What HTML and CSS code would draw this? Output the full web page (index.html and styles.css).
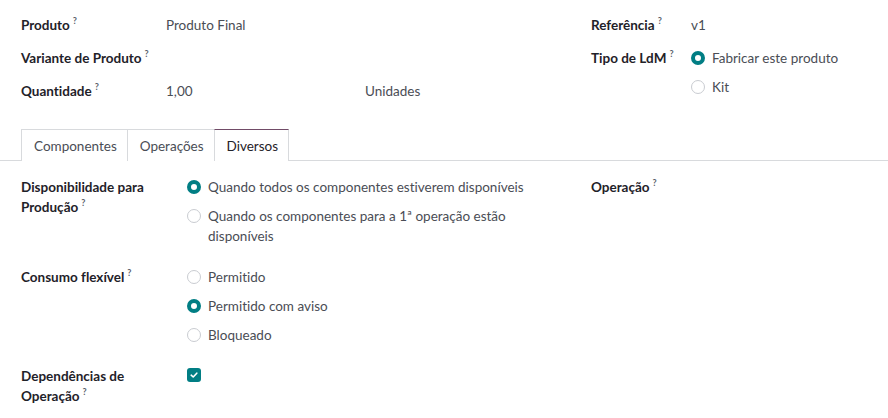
FILE: index.html
```html
<!DOCTYPE html>
<html lang="pt">
<head>
<meta charset="utf-8">
<link rel="stylesheet" href="styles.css">
</head>
<body>
<div class="sheet">
  <div class="top">
    <div class="group group-left">
      <div class="row">
        <div class="label">Produto<sup>?</sup></div>
        <div class="value">Produto Final</div>
      </div>
      <div class="row">
        <div class="label">Variante de Produto<sup>?</sup></div>
        <div class="value"></div>
      </div>
      <div class="row">
        <div class="label">Quantidade<sup>?</sup></div>
        <div class="value qty"><span class="num">1,00</span><span class="uom">Unidades</span></div>
      </div>
    </div>
    <div class="group group-right">
      <div class="row">
        <div class="label">Referência<sup>?</sup></div>
        <div class="value">v1</div>
      </div>
      <div class="row">
        <div class="label">Tipo de LdM<sup>?</sup></div>
        <div class="value options">
          <div class="opt"><span class="radio checked"></span><span>Fabricar este produto</span></div>
          <div class="opt"><span class="radio"></span><span>Kit</span></div>
        </div>
      </div>
    </div>
  </div>

  <div class="tabs">
    <div class="tab">Componentes</div>
    <div class="tab">Operações</div>
    <div class="tab active">Diversos</div>
  </div>

  <div class="pane">
    <div class="group tgroup-left">
      <div class="trow">
        <div class="tlabel">Disponibilidade para Produção<sup>?</sup></div>
        <div class="options">
          <div class="opt"><span class="radio checked"></span><span class="opt-text">Quando todos os componentes estiverem disponíveis</span></div>
          <div class="opt"><span class="radio"></span><span class="opt-text">Quando os componentes para a 1ª operação estão disponíveis</span></div>
        </div>
      </div>
      <div class="trow">
        <div class="tlabel">Consumo flexível<sup>?</sup></div>
        <div class="options">
          <div class="opt"><span class="radio"></span><span class="opt-text">Permitido</span></div>
          <div class="opt"><span class="radio checked"></span><span class="opt-text">Permitido com aviso</span></div>
          <div class="opt"><span class="radio"></span><span class="opt-text">Bloqueado</span></div>
        </div>
      </div>
      <div class="trow">
        <div class="tlabel">Dependências de Operação<sup>?</sup></div>
        <div class="options">
          <span class="checkbox"><svg width="10" height="10" viewBox="0 0 10 10"><path d="M2.2 5.2 L4.2 7 L7.8 3.2" fill="none" stroke="#fff" stroke-width="1.6" stroke-linecap="round" stroke-linejoin="round"/></svg></span>
        </div>
      </div>
    </div>
    <div class="group tgroup-right">
      <div class="trow">
        <div class="label">Operação<sup>?</sup></div>
      </div>
    </div>
  </div>
</div>
</body>
</html>
```

FILE: styles.css
```css
* { box-sizing: border-box; }
html, body { margin: 0; padding: 0; background: #fff; }
body {
  font-family: "Lato", "Open Sans", sans-serif;
  font-size: 13.5px;
  line-height: 20px;
  color: #4a4d55;
  font-variant-ligatures: none;
  font-feature-settings: "liga" 0, "clig" 0;
}
.sheet { width: 888px; }
.top {
  display: grid;
  grid-template-columns: 570px 1fr;
  padding: 15px 0 0 21px;
}
.row {
  display: grid;
  grid-template-columns: 145px 1fr;
  margin-bottom: 13px;
}
.group-right .row { grid-template-columns: 100px 1fr; }
.label, .tlabel {
  color: #1f2229;
  font-weight: 700;
}
sup {
  font-size: 9px;
  line-height: 0;
  vertical-align: 6px;
  margin-left: 3px;
  font-weight: 700;
  color: #5a5f6b;
}
.value { color: #4a4d55; }
.qty { display: flex; }
.qty .num { width: 199px; }
.options { display: flex; flex-direction: column; gap: 9px; }
.opt { display: flex; align-items: flex-start; }
.radio {
  flex: none;
  width: 14px;
  height: 14px;
  border-radius: 50%;
  border: 1px solid #c9ccd1;
  background: #fff;
  margin: 3px 7px 0 0;
}
.radio.checked {
  border: 4px solid #017e84;
}
.opt-text { max-width: 330px; }
.tabs {
  display: flex;
  margin-top: 15px;
  padding-left: 21px;
  border-bottom: 1px solid #d8dadd;
  height: 32px;
}
.tab {
  height: 32px;
  padding: 6px 10px 0 12px;
  border: 1px solid #d8dadd;
  border-bottom: none;
  color: #4a4d55;
  margin-right: -1px;
  background: #fff;
}
.tab.active {
  border-top-color: #714b67;
  color: #1f2229;
  height: 32px;
  position: relative;
  z-index: 1;
}
.pane {
  display: grid;
  grid-template-columns: 570px 1fr;
  padding: 16px 0 0 21px;
}
.trow {
  display: grid;
  grid-template-columns: 166px 1fr;
  margin-bottom: 21px;
}
.tlabel { padding-right: 20px; }
.checkbox {
  width: 14px;
  height: 14px;
  border-radius: 3px;
  background: #017e84;
  display: flex;
  align-items: center;
  justify-content: center;
  margin-top: 2px;
}
```
